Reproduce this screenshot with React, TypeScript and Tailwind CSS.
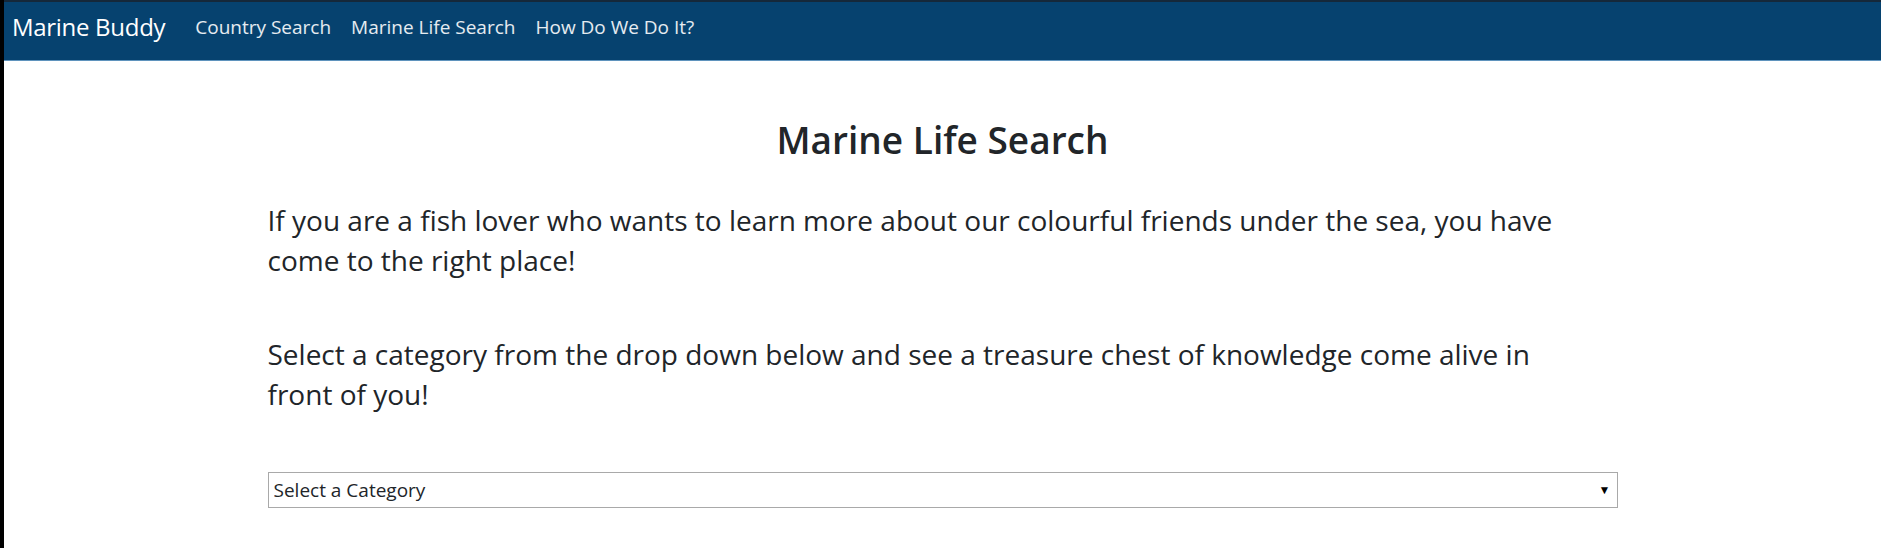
import { useState } from "react"

const font = { fontFamily: "'Open Sans', 'Noto Sans', sans-serif" }

const links = ["Country Search", "Marine Life Search", "How Do We Do It?"]

function Navbar() {
  return (
    <nav className="flex items-start h-[61px] bg-[#06426f] border-t-2 border-[#15283a] border-b border-b-[#5f93bd] px-[8px] pt-[9px]">
      <span className="text-[24px] leading-[32px] text-white tracking-[-0.3px] mr-[30px]">Marine Buddy</span>
      <div className="flex items-center gap-[20px] h-[32px]">
        {links.map((l) => (
          <a key={l} href="#" className="text-[19px] text-white/90 hover:text-white">
            {l}
          </a>
        ))}
      </div>
    </nav>
  )
}

export default function App() {
  const [category, setCategory] = useState("")

  return (
    <div className="min-h-[548px] bg-white border-l-4 border-black" style={font}>
      <Navbar />
      <main className="w-[1350px] mx-auto text-[#212529]">
        <h2 className="mt-[55px] text-center text-[37px] font-semibold leading-[48px]">
          Marine Life Search
        </h2>
        <p className="mt-[36px] text-[28px] leading-[40px]">
          If you are a fish lover who wants to learn more about our colourful friends under the sea, you have
          <br />
          come to the right place!
        </p>
        <p className="mt-[54px] text-[28px] leading-[40px]">
          Select a category from the drop down below and see a treasure chest of knowledge come alive in
          <br />
          front of you!
        </p>
        <div className="relative mt-[58px]">
          <select
            value={category}
            onChange={(e) => setCategory(e.target.value)}
            className="w-full h-[36px] appearance-none border border-[#a9a9a9] bg-white pl-[5px] text-[19px] text-[#212529] outline-none"
          >
            <option value="">Select a Category</option>
            <option value="fish">Fish</option>
            <option value="coral">Coral</option>
            <option value="mammals">Marine Mammals</option>
          </select>
          <span className="pointer-events-none absolute right-[7px] top-[9px] text-[12px] text-black">▼</span>
        </div>
      </main>
    </div>
  )
}
